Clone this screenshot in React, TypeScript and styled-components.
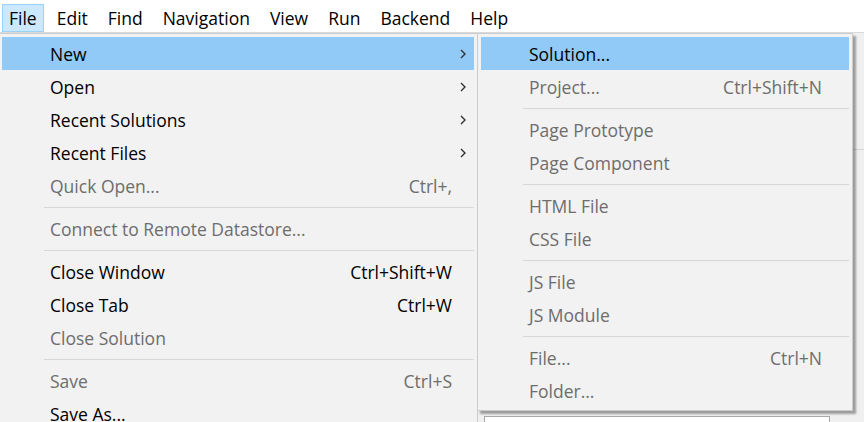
import styled, { createGlobalStyle } from 'styled-components';

const GlobalStyle = createGlobalStyle`
  html, body {
    margin: 0;
    padding: 0;
    background: #ffffff;
    overflow: hidden;
  }
  * {
    box-sizing: border-box;
  }
`;

const FONT = `"Open Sans", "Noto Sans", "Liberation Sans", sans-serif`;

const Screen = styled.div`
  position: relative;
  width: 864px;
  height: 422px;
  overflow: hidden;
  display: flex;
  flex-direction: column;
  font-family: ${FONT};
  font-size: 17.5px;
  color: #000;
`;

const MenuBar = styled.div`
  display: flex;
  align-items: stretch;
  height: 33px;
  padding: 4px 0 0 2px;
  background: #ffffff;
  border-bottom: 1px solid #dadada;
`;

const MenuBarItem = styled.div<{ $active?: boolean }>`
  display: flex;
  align-items: center;
  height: 28px;
  padding: 0 6px;
  margin-right: 6px;
  border: 1px solid ${(p) => (p.$active ? '#99d1ff' : 'transparent')};
  background: ${(p) => (p.$active ? '#cce8ff' : 'transparent')};
  white-space: nowrap;
`;

// app content that sits behind the open menus
const Workspace = styled.div`
  flex: 1;
  display: flex;
  flex-direction: column;
  background: #f0f0f0;
`;

const WorkspaceHeader = styled.div`
  height: 117px;
  border-bottom: 1px solid #d4d4d4;
`;

const WorkspaceBody = styled.div`
  flex: 1;
  display: flex;
  justify-content: flex-end;
  align-items: flex-end;
  padding-right: 34px;
`;

const Canvas = styled.div`
  width: 346px;
  height: 6px;
  background: #ffffff;
  border: 1px solid #a8a8a8;
  border-bottom: none;
`;

const MenuPanel = styled.div<{ $left: number; $width: number; $shadow?: boolean }>`
  position: absolute;
  top: 33px;
  left: ${(p) => p.$left}px;
  width: ${(p) => p.$width}px;
  padding: 3px 3px;
  background: #f2f2f2;
  border: 1px solid #cccccc;
  box-shadow: ${(p) => (p.$shadow ? '3px 3px 2px rgba(0, 0, 0, 0.35)' : 'none')};
`;

const Item = styled.div<{ $hot?: boolean; $disabled?: boolean; $gutter: number }>`
  display: flex;
  align-items: center;
  height: 33px;
  padding: 0 0 0 48px;
  background: ${(p) => (p.$hot ? '#91c9f7' : 'transparent')};
  color: ${(p) => (p.$disabled ? '#6d6d6d' : '#000000')};
  white-space: nowrap;

  & > .shortcut {
    margin-left: auto;
    padding-right: ${(p) => p.$gutter}px;
  }
`;

const Label = styled.span`
  flex: 1;
`;

const Shortcut = styled.span``;

const ArrowSlot = styled.span`
  display: flex;
  align-items: center;
  justify-content: flex-start;
  width: 22px;
  padding-left: 8px;
`;

const Separator = styled.div`
  height: 10px;
  display: flex;
  align-items: center;
  padding-left: 42px;

  &::after {
    content: '';
    flex: 1;
    height: 1px;
    background: #d7d7d7;
  }
`;

const Chevron = () => (
  <svg width="6" height="10" viewBox="0 0 6 10">
    <path d="M1 1 L5 5 L1 9" fill="none" stroke="#333333" strokeWidth="1.4" />
  </svg>
);

type Entry =
  | { sep: true }
  | { sep?: false; label: string; shortcut?: string; disabled?: boolean; sub?: boolean; hot?: boolean };

const fileMenu: Entry[] = [
  { label: 'New', sub: true, hot: true },
  { label: 'Open', sub: true },
  { label: 'Recent Solutions', sub: true },
  { label: 'Recent Files', sub: true },
  { label: 'Quick Open...', shortcut: 'Ctrl+,', disabled: true },
  { sep: true },
  { label: 'Connect to Remote Datastore...', disabled: true },
  { sep: true },
  { label: 'Close Window', shortcut: 'Ctrl+Shift+W' },
  { label: 'Close Tab', shortcut: 'Ctrl+W' },
  { label: 'Close Solution', disabled: true },
  { sep: true },
  { label: 'Save', shortcut: 'Ctrl+S', disabled: true },
  { label: 'Save As...' },
];

const newMenu: Entry[] = [
  { label: 'Solution...', hot: true },
  { label: 'Project...', shortcut: 'Ctrl+Shift+N', disabled: true },
  { sep: true },
  { label: 'Page Prototype', disabled: true },
  { label: 'Page Component', disabled: true },
  { sep: true },
  { label: 'HTML File', disabled: true },
  { label: 'CSS File', disabled: true },
  { sep: true },
  { label: 'JS File', disabled: true },
  { label: 'JS Module', disabled: true },
  { sep: true },
  { label: 'File...', shortcut: 'Ctrl+N', disabled: true },
  { label: 'Folder...', disabled: true },
];

const MenuList = ({ entries, arrows }: { entries: Entry[]; arrows: boolean }) => (
  <>
    {entries.map((e, i) => {
      if (e.sep) return <Separator key={i} />;
      return (
        <Item key={i} $hot={e.hot} $disabled={e.disabled} $gutter={arrows ? 0 : 27}>
          <Label>{e.label}</Label>
          {e.shortcut && <Shortcut className="shortcut">{e.shortcut}</Shortcut>}
          {arrows && <ArrowSlot>{e.sub && <Chevron />}</ArrowSlot>}
        </Item>
      );
    })}
  </>
);

const topMenus = ['File', 'Edit', 'Find', 'Navigation', 'View', 'Run', 'Backend', 'Help'];

export default function App() {
  return (
    <>
      <GlobalStyle />
      <Screen>
        <MenuBar>
          {topMenus.map((m, i) => (
            <MenuBarItem key={m} $active={i === 0}>
              {m}
            </MenuBarItem>
          ))}
        </MenuBar>
        <Workspace>
          <WorkspaceHeader />
          <WorkspaceBody>
            <Canvas />
          </WorkspaceBody>
        </Workspace>

        <MenuPanel $left={-2} $width={480}>
          <MenuList entries={fileMenu} arrows />
        </MenuPanel>
        <MenuPanel $left={477} $width={376} $shadow>
          <MenuList entries={newMenu} arrows={false} />
        </MenuPanel>
      </Screen>
    </>
  );
}
